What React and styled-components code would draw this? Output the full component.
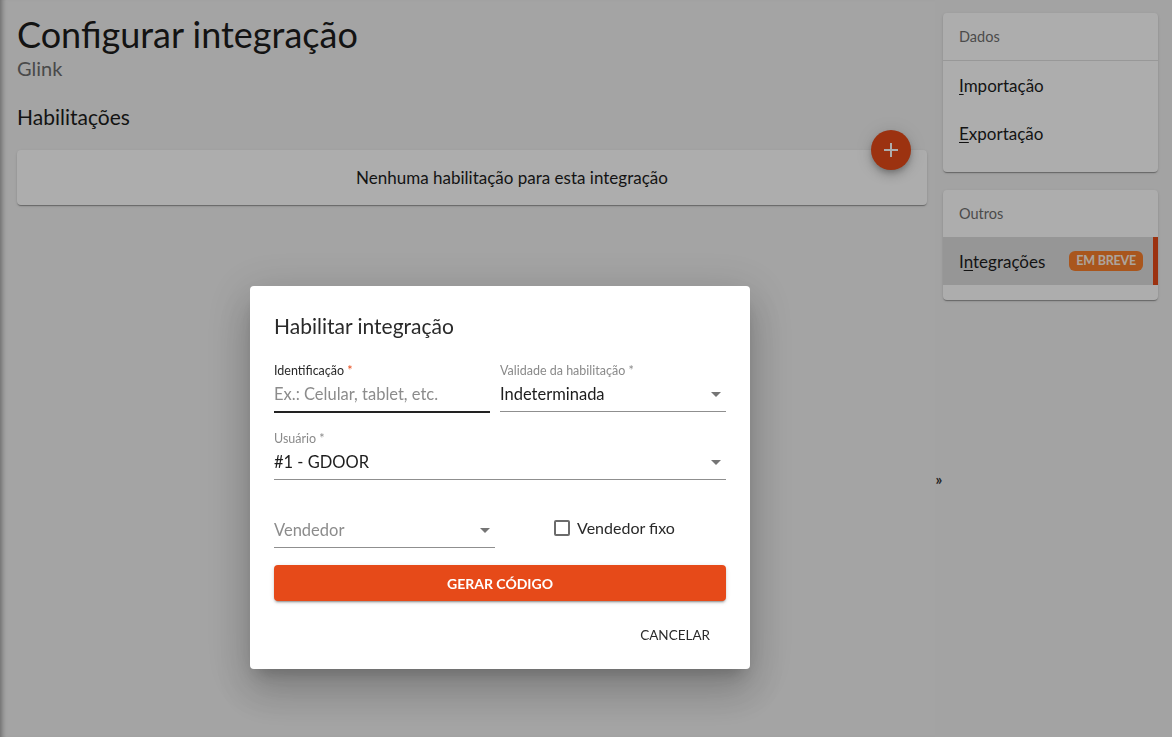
import React from "react";
import styled, { createGlobalStyle } from "styled-components";

const Global = createGlobalStyle`
  html, body { margin: 0; padding: 0; }
  body {
    font-family: Lato, "Noto Sans", sans-serif;
    background: #f2f2f2;
    color: #212121;
    overflow: hidden;
  }
  * { box-sizing: border-box; }
`;

const Page = styled.div`
  display: flex;
  width: 1172px;
  height: 737px;
  background: #f2f2f2;
`;

const Main = styled.main`
  width: 935px;
  flex: none;
  padding: 14px 8px 0 17px;
  box-shadow: inset 6px 0 5px -4px rgba(0, 0, 0, 0.35);
`;

const Title = styled.h1`
  margin: 0;
  font-size: 36px;
  font-weight: 400;
  line-height: 40px;
  color: #1d1d1d;
`;

const Subtitle = styled.div`
  margin-top: 1px;
  font-size: 20px;
  line-height: 26px;
  color: #6d6d6d;
`;

const SectionTitle = styled.h2`
  margin: 23px 0 0;
  font-size: 21px;
  font-weight: 400;
  line-height: 26px;
  color: #1d1d1d;
`;

const EmptyCard = styled.div`
  position: relative;
  margin-top: 20px;
  height: 55px;
  padding-left: 80px;
  background: #fff;
  border-radius: 4px;
  box-shadow: 0 2px 1px -1px rgba(0,0,0,.2), 0 1px 1px 0 rgba(0,0,0,.14), 0 1px 3px 0 rgba(0,0,0,.12);
  display: flex;
  align-items: center;
  justify-content: center;
  font-size: 17px;
  color: #1d1d1d;
`;

const Fab = styled.button`
  position: absolute;
  right: 16px;
  top: -20px;
  width: 40px;
  height: 40px;
  border-radius: 50%;
  border: none;
  background: #e64a19;
  box-shadow: 0 3px 5px -1px rgba(0,0,0,.2), 0 6px 10px 0 rgba(0,0,0,.14), 0 1px 18px 0 rgba(0,0,0,.12);
  display: flex;
  align-items: center;
  justify-content: center;
  padding: 0;
`;

const Toggle = styled.div`
  width: 8px;
  flex: none;
  background: #f0f0f0;
  display: flex;
  justify-content: center;
  padding-top: 470px;
  font-size: 15px;
  font-weight: 700;
  color: #333;
  line-height: 18px;
`;

const Sidebar = styled.aside`
  flex: 1;
  background: #f0f0f0;
  padding: 13px 14px 0 0;
  display: flex;
  flex-direction: column;
  gap: 18px;
`;

const NavCard = styled.div`
  background: #fff;
  border-radius: 4px;
  box-shadow: 0 2px 1px -1px rgba(0,0,0,.2), 0 1px 1px 0 rgba(0,0,0,.14), 0 1px 3px 0 rgba(0,0,0,.12);
  padding-bottom: 15px;
  overflow: hidden;
`;

const NavHeader = styled.div`
  height: ${(p) => (p.$bordered ? 48 : 47)}px;
  display: flex;
  align-items: center;
  padding-left: 16px;
  font-size: 14.5px;
  color: #6f6f6f;
  border-bottom: ${(p) => (p.$bordered ? "1px solid #e0e0e0" : "none")};
`;

const NavItem = styled.div`
  position: relative;
  height: 48px;
  display: flex;
  align-items: center;
  justify-content: space-between;
  padding: 0 10px 0 16px;
  font-size: 17px;
  color: #1d1d1d;
  background: ${(p) => (p.$active ? "#dedede" : "transparent")};
  border-right: ${(p) => (p.$active ? "5px solid #e64a19" : "none")};
  u { text-decoration-thickness: 1px; text-underline-offset: 2px; }
`;

const Badge = styled.span`
  background: #f97f2c;
  color: #fff2e6;
  font-size: 12.5px;
  font-weight: 700;
  line-height: 20px;
  padding: 0 7px;
  border-radius: 6px;
  letter-spacing: -0.2px;
`;

const Backdrop = styled.div`
  position: fixed;
  inset: 0;
  background: rgba(0, 0, 0, 0.32);
  display: flex;
  align-items: flex-start;
  padding: 286px 0 0 250px;
`;

const Dialog = styled.div`
  width: 500px;
  background: #fff;
  border-radius: 4px;
  padding: 24px 24px 16px;
  box-shadow: 0 11px 15px -7px rgba(0,0,0,.2), 0 24px 38px 3px rgba(0,0,0,.14), 0 9px 46px 8px rgba(0,0,0,.12);
  display: flex;
  flex-direction: column;
`;

const DialogTitle = styled.h3`
  margin: 0 0 21px;
  font-size: 21px;
  font-weight: 400;
  line-height: 32px;
  color: #2a2a2a;
`;

const Row = styled.div`
  display: flex;
  align-items: flex-start;
  gap: 10px;
  margin-bottom: ${(p) => (p.$last ? 17 : 19)}px;
`;

const Field = styled.div`
  width: ${(p) => p.$width || "auto"};
  flex: ${(p) => (p.$width ? "none" : 1)};
  display: flex;
  flex-direction: column;
`;

const Label = styled.div`
  height: 16px;
  font-size: 12.5px;
  line-height: 16px;
  color: ${(p) => (p.$focused ? "#2a2a2a" : "#8a8a8a")};
  span { color: ${(p) => (p.$focused ? "#e64a19" : "inherit")}; }
`;

const InputRow = styled.div`
  box-sizing: content-box;
  height: 30px;
  padding: 0 5px 2px 0;
  display: flex;
  align-items: center;
  justify-content: space-between;
  font-size: 16.5px;
  color: ${(p) => (p.$placeholder ? "#8c8c8c" : "#1d1d1d")};
  border-bottom: ${(p) => (p.$focused ? "2px solid #222" : "1px solid #8f8f8f")};
  margin-bottom: ${(p) => (p.$focused ? "-1px" : "0")};
`;

const Arrow = styled.span`
  width: 0;
  height: 0;
  border-left: 5px solid transparent;
  border-right: 5px solid transparent;
  border-top: 5px solid #757575;
`;

const CheckWrap = styled.label`
  display: flex;
  align-items: center;
  gap: 7px;
  margin: 19px 0 0 49px;
  font-size: 16px;
  color: #2a2a2a;
`;

const CheckBox = styled.span`
  width: 16px;
  height: 16px;
  border: 2px solid #6b6b6b;
  border-radius: 2px;
`;

const PrimaryButton = styled.button`
  height: 36px;
  border: none;
  border-radius: 4px;
  background: #e64a19;
  color: #fff;
  font-family: inherit;
  font-size: 14px;
  font-weight: 700;
  box-shadow: 0 3px 1px -2px rgba(0,0,0,.2), 0 2px 2px 0 rgba(0,0,0,.14), 0 1px 5px 0 rgba(0,0,0,.12);
`;

const Actions = styled.div`
  margin-top: 16px;
  display: flex;
  justify-content: flex-end;
`;

const TextButton = styled.button`
  height: 36px;
  padding: 0 16px;
  border: none;
  background: transparent;
  font-family: inherit;
  font-size: 13.5px;
  color: #2a2a2a;
`;

export default function App() {
  return (
    <>
      <Global />
      <Page>
        <Main>
          <Title>Configurar integração</Title>
          <Subtitle>Glink</Subtitle>
          <SectionTitle>Habilitações</SectionTitle>
          <EmptyCard>
            Nenhuma habilitação para esta integração
            <Fab aria-label="Adicionar">
              <svg width="16" height="16" viewBox="0 0 16 16">
                <path d="M8 1v14M1 8h14" stroke="#fff" strokeWidth="2" />
              </svg>
            </Fab>
          </EmptyCard>
        </Main>
        <Toggle>»</Toggle>
        <Sidebar>
          <NavCard>
            <NavHeader $bordered>Dados</NavHeader>
            <NavItem><span><u>I</u>mportação</span></NavItem>
            <NavItem><span><u>E</u>xportação</span></NavItem>
          </NavCard>
          <NavCard>
            <NavHeader>Outros</NavHeader>
            <NavItem $active>
              <span>I<u>n</u>tegrações</span>
              <Badge>EM BREVE</Badge>
            </NavItem>
          </NavCard>
        </Sidebar>
      </Page>
      <Backdrop>
        <Dialog>
          <DialogTitle>Habilitar integração</DialogTitle>
          <Row>
            <Field $width="216px">
              <Label $focused>Identificação <span>*</span></Label>
              <InputRow $focused $placeholder>Ex.: Celular, tablet, etc.</InputRow>
            </Field>
            <Field>
              <Label>Validade da habilitação *</Label>
              <InputRow>Indeterminada<Arrow /></InputRow>
            </Field>
          </Row>
          <Row>
            <Field>
              <Label>Usuário *</Label>
              <InputRow>#1 - GDOOR<Arrow /></InputRow>
            </Field>
          </Row>
          <Row $last>
            <Field $width="221px">
              <Label />
              <InputRow $placeholder>Vendedor<Arrow /></InputRow>
            </Field>
            <CheckWrap>
              <CheckBox />
              Vendedor fixo
            </CheckWrap>
          </Row>
          <PrimaryButton>GERAR CÓDIGO</PrimaryButton>
          <Actions>
            <TextButton>CANCELAR</TextButton>
          </Actions>
        </Dialog>
      </Backdrop>
    </>
  );
}
